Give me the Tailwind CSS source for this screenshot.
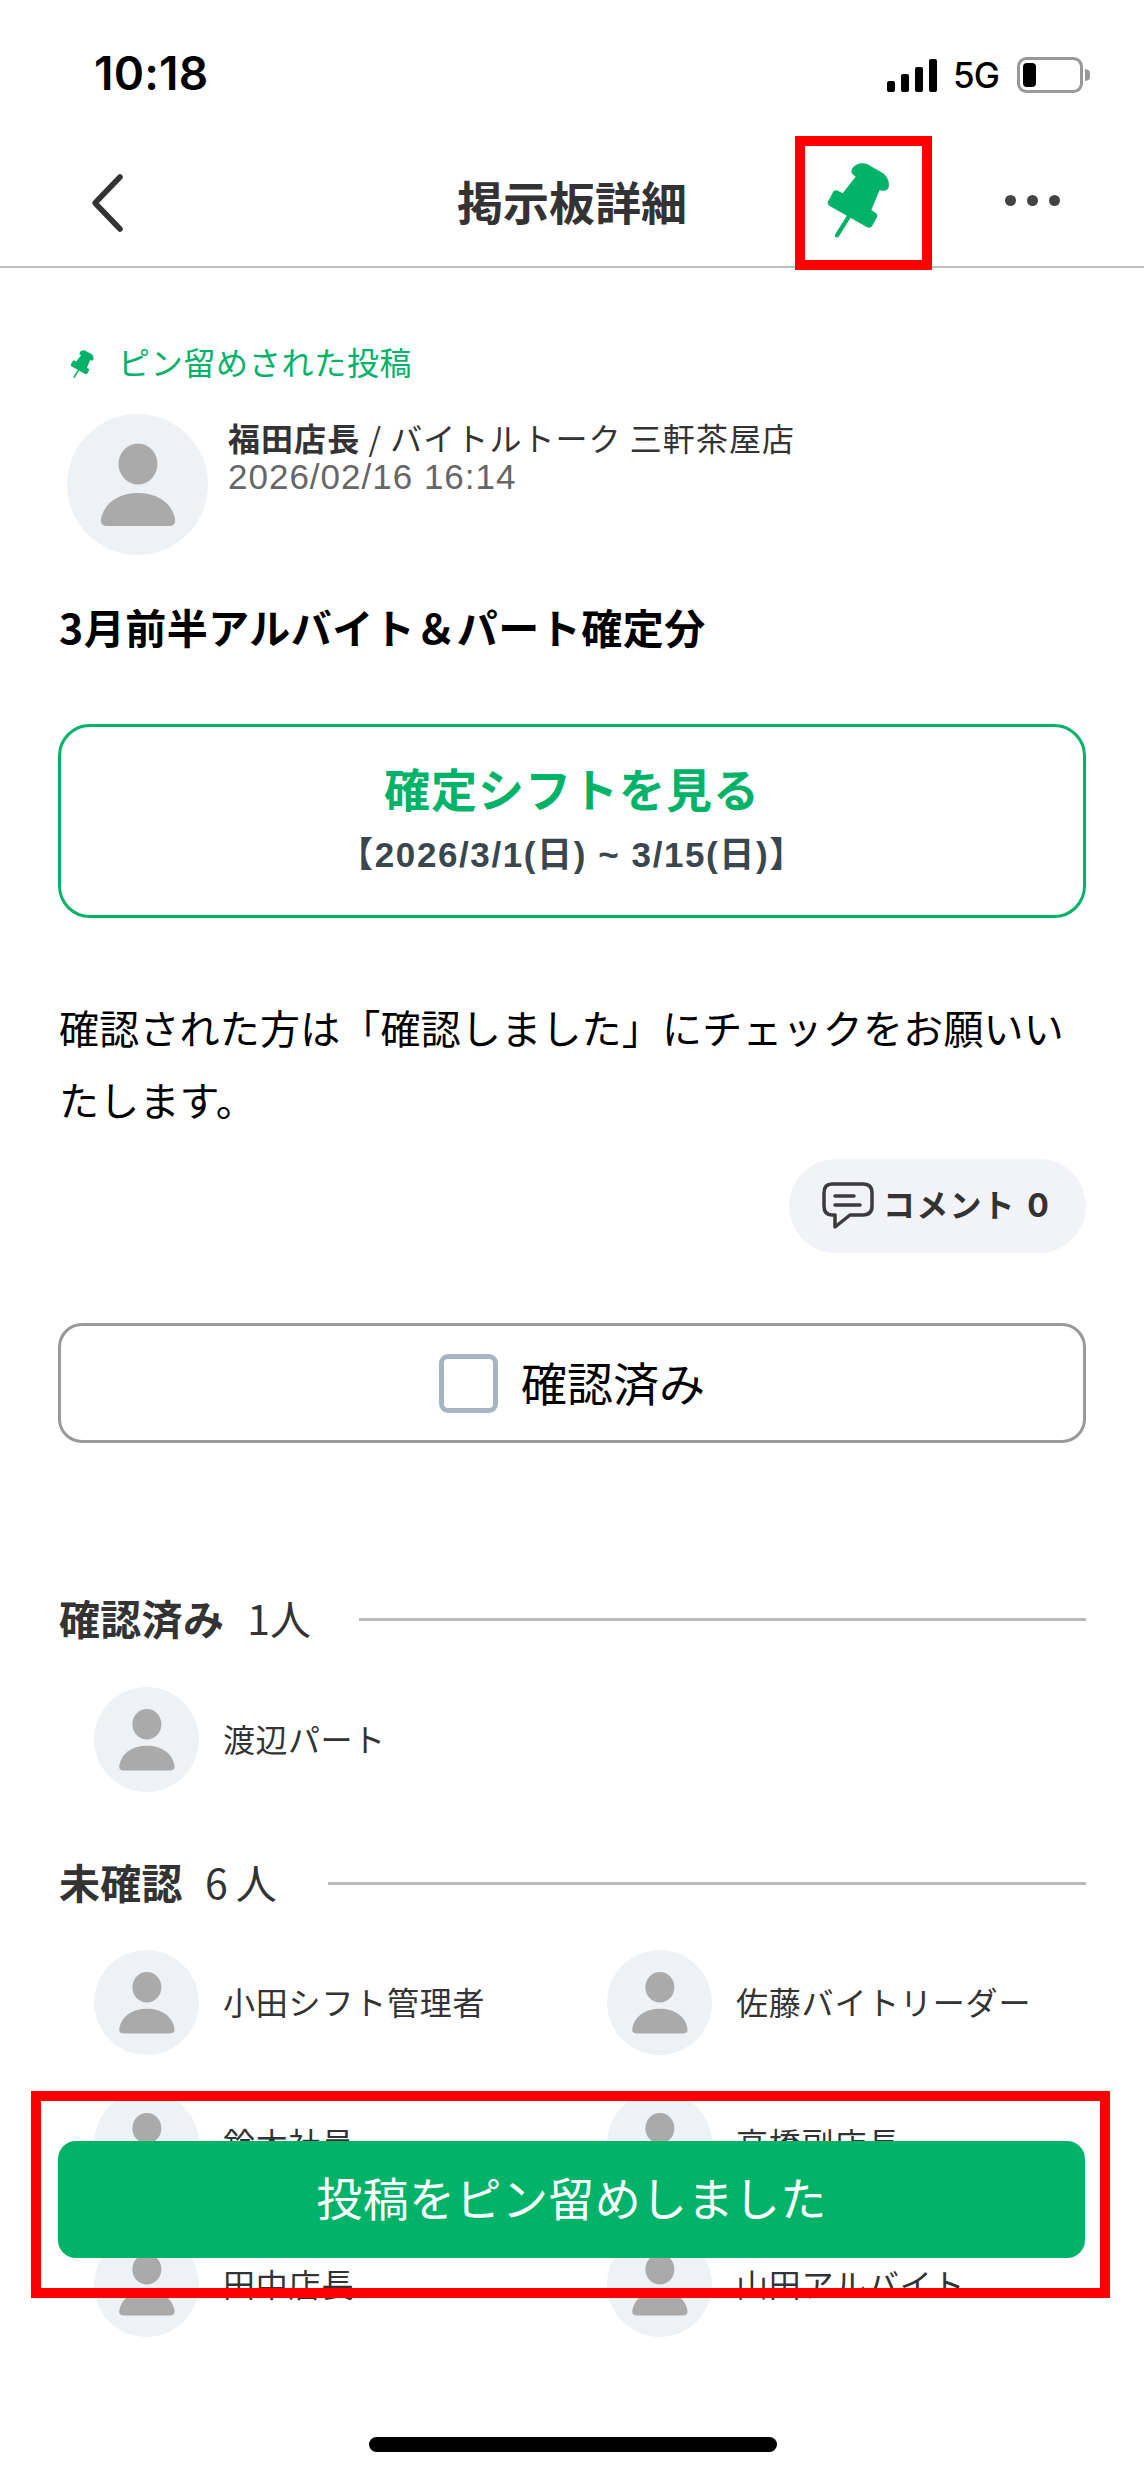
<!DOCTYPE html>
<html lang="ja"><head><meta charset="utf-8">
<script src="https://cdn.jsdelivr.net/npm/@tailwindcss/browser@4"></script>
</head>
<body class="bg-white">
<svg class="hidden"><defs>
<symbol id="pin" viewBox="130 90 210 240"><path fill="#00b368" d="M218 115C226 103 245 96 262 102L308 128C322 137 331 155 327 172C324 183 312 185 300 180L275 240L288 249C294 253 294 258 291 263L279 285C275 293 268 295 261 291L150 228C144 224 142 219 146 213L159 188C163 181 170 179 176 183L189 190L228 140L219 133C214 128 214 121 218 115Z"/><path d="M206 262L172 316" stroke="#00b368" stroke-width="13" stroke-linecap="round" fill="none"/></symbol>
<symbol id="person" viewBox="0 0 141 141"><ellipse cx="71" cy="50" rx="19.5" ry="20.5" fill="#aaaaaa"/><path fill="#aaaaaa" d="M34 105C37 90 50 79 71 79C92 79 105 90 108 105Q109 112 102 112L40 112Q33 112 34 105Z"/></symbol>
</defs></svg>
<div class="relative w-[1144px] h-[2475px] overflow-hidden bg-white font-['Noto_Sans_CJK_JP','Noto_Sans_CJK_SC',sans-serif] text-[#333333]">

  <div class="h-[130px] flex items-start justify-between pl-[94px] pr-[54px] pt-[43px]">
    <span class="font-['Inter',sans-serif] font-semibold text-[46px] leading-[60px] tracking-[0.2px] text-black">10:18</span>
    <div class="flex items-center pt-[12px]">
      <svg width="50" height="33" viewBox="0 0 50 33" fill="#000"><rect x="0" y="22" width="8" height="11" rx="2"/><rect x="14" y="15" width="8" height="18" rx="2"/><rect x="28" y="8" width="8" height="25" rx="2"/><rect x="42" y="0" width="8" height="33" rx="2"/></svg>
      <span class="ml-[16px] mr-[18px] w-[46px] font-['Inter',sans-serif] text-[35px] leading-[40px] tracking-[-1px] text-black font-medium">5G</span>
      <svg width="73" height="36" viewBox="0 0 73 36"><rect x="1.5" y="1.5" width="63" height="33" rx="8" fill="none" stroke="#999" stroke-width="3"/><rect x="6" y="6" width="13" height="24" rx="4" fill="#000"/><path d="M68 12a6 6 0 0 1 0 12z" fill="#999"/></svg>
    </div>
  </div>

  <div class="relative h-[138px] border-b-2 border-[#bbbbbb]">
    <svg class="absolute left-[89px] top-[43px]" width="36" height="60" viewBox="0 0 36 60"><path d="M31 4L6 30L31 56" fill="none" stroke="#333" stroke-width="5.5" stroke-linecap="round" stroke-linejoin="round"/></svg>
    <div class="absolute inset-x-0 top-[35px] text-center font-bold text-[46px] leading-[70px]">掲示板詳細</div>
    <svg class="absolute left-[823px] top-[30px]" width="70" height="80"><use href="#pin"/></svg>
    <div class="absolute left-[1005px] top-[65px] flex gap-[11px]">
      <span class="w-[11px] h-[11px] rounded-full bg-[#444444]"></span><span class="w-[11px] h-[11px] rounded-full bg-[#444444]"></span><span class="w-[11px] h-[11px] rounded-full bg-[#444444]"></span>
    </div>
  </div>

  <main class="px-[58px]">
    <div class="flex items-center mt-[70px] h-[46px] pl-[11px]">
      <svg class="mt-[6px]" width="26" height="30"><use href="#pin"/></svg>
      <span class="ml-[23px] text-[32px] leading-[46px] text-[#00b368] tracking-[0.7px]">ピン留めされた投稿</span>
    </div>
    <div class="flex mt-[30px] pl-[9px]">
      <svg class="w-[141px] h-[141px] rounded-full bg-[#eff2f5] shrink-0"><use href="#person"/></svg>
      <div class="ml-[20px] pt-[1px] text-[32px] leading-[44px]">
        <div class="tracking-[1.05px]"><span class="font-bold">福田店長</span> / バイトルトーク 三軒茶屋店</div>
        <div class="mt-[-4px] text-[#666666] font-['Liberation_Sans',sans-serif] text-[35px] tracking-[1px]">2026/02/16 16:14</div>
      </div>
    </div>
    <h1 class="mt-[41px] ml-[1px] font-bold text-[41px] leading-[60px] tracking-[0.5px] text-black">3月前半アルバイト＆パート確定分</h1>

    <div class="mt-[68px] h-[194px] rounded-[32px] border-[3px] border-[#00b368] flex flex-col items-center pt-[26px]">
      <div class="font-bold text-[46px] leading-[68px] tracking-[1px] text-[#00b368]">確定シフトを見る</div>
      <div class="font-['Liberation_Sans','Noto_Sans_CJK_JP',sans-serif] font-bold text-[35px] leading-[50px] mt-[9px] tracking-[1.6px] text-[#3a474f]">【2026/3/1(日) ~ 3/15(日)】</div>
    </div>

    <p class="mt-[73px] ml-[1px] text-[40px] leading-[72px] tracking-[0.2px] text-black whitespace-nowrap">確認された方は「確認しました」にチェックをお願いい<br>たします。</p>

    <div class="flex justify-end mt-[24px]">
      <div class="w-[297px] h-[94px] rounded-full bg-[#f2f3f7] flex items-center pl-[33px]">
        <svg width="52" height="48" viewBox="0 0 52 48" fill="none" stroke="#3c3c3c" stroke-width="3.5" stroke-linejoin="round" stroke-linecap="round"><path d="M10 2H41Q50 2 50 11V24Q50 33 41 33H28L13 45V33H10Q2 33 2 24V11Q2 2 10 2Z"/><path d="M13 14H32M13 23H38"/></svg>
        <span class="ml-[9px] pb-[4px] font-bold text-[32px] leading-[44px] tracking-[1.2px] whitespace-nowrap">コメント <span class="font-['Inter',sans-serif] ml-[3px]">0</span></span>
      </div>
    </div>

    <div class="mt-[70px] h-[120px] rounded-[24px] border-[3px] border-[#999999] flex items-center justify-center">
      <span class="w-[59px] h-[59px] rounded-[9px] border-[5px] border-[#a5b5c3] bg-white"></span>
      <span class="ml-[23px] pb-[5px] text-[46px] leading-[68px] text-black">確認済み</span>
    </div>

    <div class="mt-[146px] flex items-center h-[60px] ml-[1px]">
      <span class="font-bold text-[41px] pb-[3px] tracking-[0.3px]">確認済み</span>
      <span class="ml-[23px] pb-[3px] text-[41px]">1人</span>
      <span class="ml-[48px] flex-1 h-[3px] bg-[#bbbbbb]"></span>
    </div>
    <div class="mt-[38px] ml-[36px] flex items-center">
      <svg class="w-[105px] h-[105px] rounded-full bg-[#eff2f5] shrink-0"><use href="#person"/></svg>
      <span class="ml-[24px] pb-[4px] text-[32px] tracking-[0.5px]">渡辺パート</span>
    </div>

    <div class="mt-[61px] flex items-center h-[60px] ml-[1px]">
      <span class="font-bold text-[41px] pb-[3px] tracking-[0.3px]">未確認</span>
      <span class="ml-[22px] pb-[3px] text-[41px] tracking-[8px]">6人</span>
      <span class="ml-[43px] flex-1 h-[3px] bg-[#bbbbbb]"></span>
    </div>
    <div class="mt-[37px] ml-[36px] grid grid-cols-[513px_1fr] auto-rows-[105px] gap-y-[36px]">
      <div class="flex items-center"><svg class="w-[105px] h-[105px] rounded-full bg-[#eff2f5] shrink-0"><use href="#person"/></svg><span class="ml-[24px] pb-[4px] text-[32px] tracking-[0.8px]">小田シフト管理者</span></div>
      <div class="flex items-center"><svg class="w-[105px] h-[105px] rounded-full bg-[#eff2f5] shrink-0"><use href="#person"/></svg><span class="ml-[24px] pb-[4px] text-[32px] tracking-[0.8px]">佐藤バイトリーダー</span></div>
      <div class="flex items-center"><svg class="w-[105px] h-[105px] rounded-full bg-[#eff2f5] shrink-0"><use href="#person"/></svg><span class="ml-[24px] pb-[4px] text-[32px] tracking-[0.8px]">鈴木社員</span></div>
      <div class="flex items-center"><svg class="w-[105px] h-[105px] rounded-full bg-[#eff2f5] shrink-0"><use href="#person"/></svg><span class="ml-[24px] pb-[4px] text-[32px] tracking-[0.8px]">高橋副店長</span></div>
      <div class="flex items-center"><svg class="w-[105px] h-[105px] rounded-full bg-[#eff2f5] shrink-0"><use href="#person"/></svg><span class="ml-[24px] pb-[4px] text-[32px] tracking-[0.8px]">田中店長</span></div>
      <div class="flex items-center"><svg class="w-[105px] h-[105px] rounded-full bg-[#eff2f5] shrink-0"><use href="#person"/></svg><span class="ml-[24px] pb-[4px] text-[32px] tracking-[0.8px]">山田アルバイト</span></div>
    </div>
  </main>

  <div class="absolute left-[58px] top-[2141px] w-[1027px] h-[117px] rounded-[18px] bg-[#00b368] flex items-center justify-center pb-[6px] tracking-[0.4px] text-white text-[46px]">投稿をピン留めしました</div>
  <div class="absolute left-[795px] top-[136px] w-[137px] h-[134px] border-[10px] border-[#ff0000]"></div>
  <div class="absolute left-[31px] top-[2091px] w-[1079px] h-[207px] border-[10px] border-[#ff0000]"></div>
  <div class="absolute left-[369px] top-[2437px] w-[408px] h-[15px] rounded-full bg-black"></div>
</div>
</body></html>
